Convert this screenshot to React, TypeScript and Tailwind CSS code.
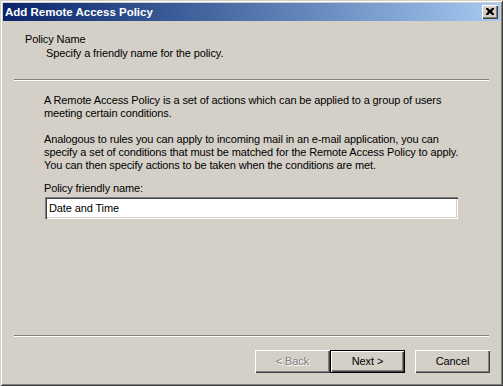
const font = { fontFamily: '"Liberation Sans", Arial, sans-serif' };

function Button({ label, disabled, isDefault }: { label: string; disabled?: boolean; isDefault?: boolean }) {
  return (
    <div className={isDefault ? "border border-black" : ""}>
      <button
        className={
          "flex items-center justify-center bg-[#d4d0c8] text-[11px] leading-[13px] tracking-[-0.1px] " +
          (isDefault ? "w-[73px] h-[21px]" : "w-[75px] h-[23px]") +
          " shadow-[inset_1px_1px_0_#ffffff,inset_-1px_-1px_0_#404040,inset_-2px_-2px_0_#808080]"
        }
      >
        <span
          className={disabled ? "text-[#808080] [text-shadow:1px_1px_0_#ffffff]" : "text-black"}
        >
          {label}
        </span>
      </button>
    </div>
  );
}

export default function App() {
  return (
    <div
      className="w-[503px] h-[386px] bg-[#d4d0c8] p-[3px] flex flex-col text-black shadow-[inset_1px_1px_0_#d4d0c8,inset_-1px_-1px_0_#404040,inset_2px_2px_0_#ffffff,inset_-2px_-2px_0_#808080]"
      style={font}
    >
      {/* Title bar */}
      <div className="h-[18px] flex items-center justify-between pl-[2px] pr-[2px] bg-gradient-to-r from-[#0a246a] to-[#a6caf0]">
        <span className="text-white font-bold text-[11.5px] leading-[13px]">Add Remote Access Policy</span>
        <div className="w-[16px] h-[14px] bg-[#d4d0c8] flex items-center justify-center shadow-[inset_1px_1px_0_#ffffff,inset_-1px_-1px_0_#404040,inset_-2px_-2px_0_#808080]">
          <svg width="8" height="7" viewBox="0 0 8 7" className="mb-[1px]">
            <path d="M0 0h2l2 2 2-2h2v1L6 3.5 8 6v1H6L4 5 2 7H0V6l2-2.5L0 1z" fill="black" />
          </svg>
        </div>
      </div>

      {/* Header */}
      <div className="pt-[12px] pl-[22px] text-[11px] leading-[13px] tracking-[-0.12px]">
        <div>Policy Name</div>
        <div className="mt-[1px] pl-[21px]">Specify a friendly name for the policy.</div>
      </div>
      <div className="mt-[19px] mx-[11px] h-[2px] border-t border-[#808080] border-b border-b-white" />

      {/* Body */}
      <div className="pt-[13px] pl-[41px] pr-[42px] text-[11px] leading-[13px] tracking-[-0.12px] whitespace-nowrap">
        <p>
          A Remote Access Policy is a set of actions which can be applied to a group of users
          <br />
          meeting certain conditions.
        </p>
        <p className="mt-[13px]">
          Analogous to rules you can apply to incoming mail in an e-mail application, you can
          <br />
          specify a set of conditions that must be matched for the Remote Access Policy to apply.
          <br />
          You can then specify actions to be taken when the conditions are met.
        </p>
        <p className="mt-[10px]">Policy friendly name:</p>
        <div className="mt-[2px] ml-[1px] h-[22px] bg-white flex items-center pl-[4px] shadow-[inset_1px_1px_0_#808080,inset_2px_2px_0_#404040,inset_-1px_-1px_0_#ffffff,inset_-2px_-2px_0_#d4d0c8]">
          Date and Time
        </div>
      </div>

      <div className="flex-1" />

      {/* Footer */}
      <div className="mx-[11px] h-[2px] border-t border-[#808080] border-b border-b-white" />
      <div className="flex justify-end items-center pr-[10px] pt-[13px] pb-[10px]">
        <Button label="< Back" disabled />
        <Button label="Next >" isDefault />
        <div className="w-[10px]" />
        <Button label="Cancel" />
      </div>
    </div>
  );
}
